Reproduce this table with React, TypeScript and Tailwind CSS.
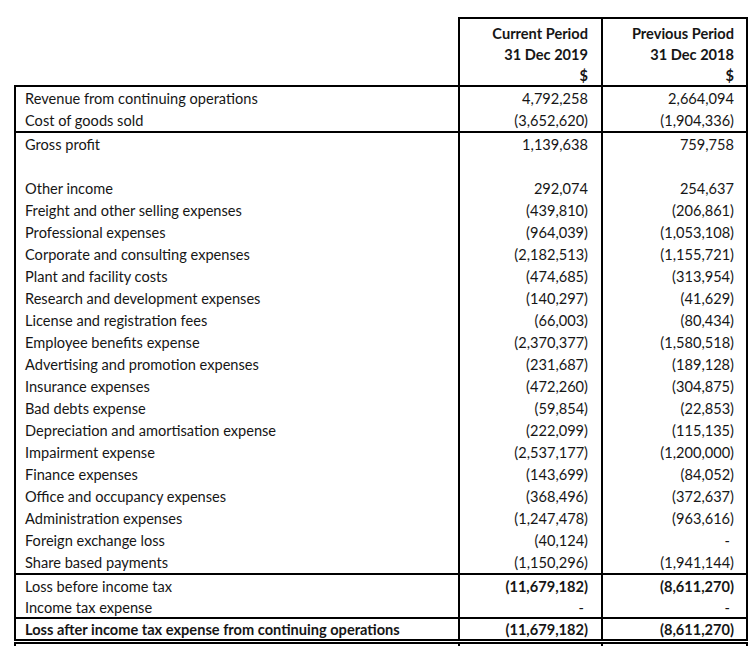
import React from 'react';

type Line = {
  label: string;
  cur: string;
  prev: string;
  boldLabel?: boolean;
  boldValues?: boolean;
  h?: string;
};

const top: Line[] = [
  { label: 'Revenue from continuing operations', cur: '4,792,258', prev: '2,664,094' },
  { label: 'Cost of goods sold', cur: '(3,652,620)', prev: '(1,904,336)' },
];

const expenses: Line[] = [
  { label: 'Other income', cur: '292,074', prev: '254,637' },
  { label: 'Freight and other selling expenses', cur: '(439,810)', prev: '(206,861)' },
  { label: 'Professional expenses', cur: '(964,039)', prev: '(1,053,108)' },
  { label: 'Corporate and consulting expenses', cur: '(2,182,513)', prev: '(1,155,721)' },
  { label: 'Plant and facility costs', cur: '(474,685)', prev: '(313,954)' },
  { label: 'Research and development expenses', cur: '(140,297)', prev: '(41,629)' },
  { label: 'License and registration fees', cur: '(66,003)', prev: '(80,434)' },
  { label: 'Employee benefits expense', cur: '(2,370,377)', prev: '(1,580,518)' },
  { label: 'Advertising and promotion expenses', cur: '(231,687)', prev: '(189,128)' },
  { label: 'Insurance expenses', cur: '(472,260)', prev: '(304,875)' },
  { label: 'Bad debts expense', cur: '(59,854)', prev: '(22,853)' },
  { label: 'Depreciation and amortisation expense', cur: '(222,099)', prev: '(115,135)' },
  { label: 'Impairment expense', cur: '(2,537,177)', prev: '(1,200,000)' },
  { label: 'Finance expenses', cur: '(143,699)', prev: '(84,052)' },
  { label: 'Office and occupancy expenses', cur: '(368,496)', prev: '(372,637)' },
  { label: 'Administration expenses', cur: '(1,247,478)', prev: '(963,616)' },
  { label: 'Foreign exchange loss', cur: '(40,124)', prev: '-' },
  { label: 'Share based payments', cur: '(1,150,296)', prev: '(1,941,144)' },
];

function Value({ v, bold }: { v: string; bold?: boolean }) {
  if (v === '-') return <span className="pr-[4px]">-</span>;
  return <span className={bold ? 'font-bold' : ''}>{v}</span>;
}

function Row({ label, cur, prev, boldLabel, boldValues, h = 'h-[22px]' }: Line) {
  return (
    <div className={`flex ${h} items-center`}>
      <div
        className={`w-[444px] h-full flex items-center border-l-2 border-black pl-[9px] pt-[2px] ${boldLabel ? 'font-bold' : ''}`}
      >
        {label}
      </div>
      <div className="w-[143px] h-full flex items-center justify-end border-l-2 border-black pr-[13px] pt-[2px]">
        <Value v={cur} bold={boldValues} />
      </div>
      <div className="w-[147px] h-full flex items-center justify-end border-l-2 border-r-2 border-black pr-[12px] pt-[2px]">
        <Value v={prev} bold={boldValues} />
      </div>
    </div>
  );
}

function Rule() {
  return <div className="w-[734px] h-[2px] bg-black" />;
}

export default function App() {
  return (
    <div className="w-[752px] h-[646px] bg-white pt-[17px] pl-[14px] text-[14.6px] text-[#161616] font-['Lato','Carlito',sans-serif] overflow-hidden">
      <div className="flex h-[68px]">
        <div className="w-[444px]" />
        <div className="w-[143px] border-l-2 border-t-2 border-black pr-[13px] pt-[4px] text-right font-bold leading-[21px]">
          <div>Current Period</div>
          <div>31 Dec 2019</div>
          <div>$</div>
        </div>
        <div className="w-[147px] border-l-2 border-t-2 border-r-2 border-black pr-[12px] pt-[4px] text-right font-bold leading-[21px]">
          <div>Previous Period</div>
          <div>31 Dec 2018</div>
          <div>$</div>
        </div>
      </div>
      <Rule />
      {top.map((r) => (
        <Row key={r.label} {...r} />
      ))}
      <Rule />
      <Row label="Gross profit" cur="1,139,638" prev="759,758" />
      <Row label="" cur="" prev="" />
      {expenses.map((r) => (
        <Row key={r.label} {...r} />
      ))}
      <Rule />
      <Row label="Loss before income tax" cur="(11,679,182)" prev="(8,611,270)" boldValues h="h-[21px]" />
      <Row label="Income tax expense" cur="-" prev="-" h="h-[21px]" />
      <Rule />
      <Row
        label="Loss after income tax expense from continuing operations"
        cur="(11,679,182)"
        prev="(8,611,270)"
        boldLabel
        boldValues
        h="h-[20px]"
      />
      <div className="w-[734px] border-t-[5px] border-double border-black" />
      <Row label="" cur="" prev="" h="h-[4px]" />
    </div>
  );
}
